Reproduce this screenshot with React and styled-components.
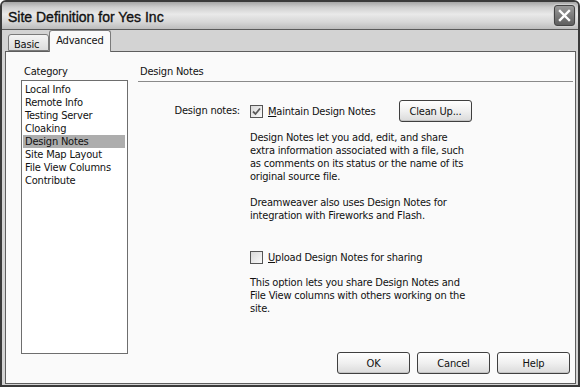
import React from "react";
import styled, { createGlobalStyle } from "styled-components";

const Global = createGlobalStyle`
  html, body { margin: 0; padding: 0; background: #fff; }
  body { font-family: "DejaVu Sans Condensed", "Liberation Sans", sans-serif; }
`;

const UI = `"DejaVu Sans Condensed", "Liberation Sans", sans-serif`;

const Window = styled.div`
  width: 580px;
  height: 387px;
  box-sizing: border-box;
  border: 2px solid #3a3a3a;
  border-radius: 6px 6px 0 0;
  background: #d3d3d3;
  display: flex;
  flex-direction: column;
  overflow: hidden;
  font-family: ${UI};
  font-size: 11px;
  letter-spacing: -0.2px;
  color: #111;
`;

const TitleBar = styled.div`
  height: 27px;
  flex: none;
  border-bottom: 1px solid #5a5a5a;
  background: linear-gradient(#a6a6a6 0%, #cfcfcf 20%, #e9e9e9 45%, #d6d6d6 75%, #bcbcbc 100%);
  display: flex;
  align-items: center;
  justify-content: space-between;
  padding: 0 3px 0 6px;
`;

const Title = styled.div`
  font-family: "Liberation Sans", sans-serif;
  font-size: 14px;
  letter-spacing: 0;
  -webkit-text-stroke: 0.35px #111;
  color: #111;
  padding-top: 2px;
`;

const CloseButton = styled.div`
  width: 19px;
  height: 19px;
  border: 1px solid #444;
  border-radius: 3px;
  box-shadow: 0 0 0 1px #cfcfcf;
  background: linear-gradient(#9a9a9a, #5e5e5e);
  display: flex;
  align-items: center;
  justify-content: center;
`;

const Frame = styled.div`
  flex: 1;
  display: flex;
  flex-direction: column;
  padding: 0 2px 1px 3px;
  min-height: 0;
`;

const TabStrip = styled.div`
  height: 21px;
  flex: none;
  display: flex;
  align-items: flex-end;
  padding-left: 3px;
`;

const Tab = styled.div`
  position: relative;
  z-index: ${(p) => (p.$active ? 2 : 1)};
  height: ${(p) => (p.$active ? "22px" : "17px")};
  margin-bottom: ${(p) => (p.$active ? "-1px" : "0")};
  box-sizing: border-box;
  padding: ${(p) => (p.$active ? "3px 7px 0 6px" : "3px 9px 0 5px")};
  border: 1px solid #7a7a7a;
  border-bottom: ${(p) => (p.$active ? "none" : "1px solid #7a7a7a")};
  border-radius: 3px 3px 0 0;
  background: ${(p) => (p.$active ? "#fafafa" : "linear-gradient(#f4f4f4, #dcdcdc)")};
  line-height: 13px;
  font-size: 11px;
`;

const Panel = styled.div`
  flex: 1;
  min-height: 0;
  border: 1px solid #5e5e5e;
  background: #fafafa;
  display: grid;
  grid-template-columns: 107px 1fr;
  column-gap: 10px;
  padding: 13px 2px 9px 15px;
`;

const Sidebar = styled.div`
  display: flex;
  flex-direction: column;
`;

const Label = styled.div`
  line-height: 13px;
  padding-left: 3px;
`;

const ListBox = styled.div`
  margin-top: 2px;
  margin-bottom: 20px;
  flex: 1;
  border: 1px solid #6e6e6e;
  background: #fff;
  padding: 2px 2px 0 1px;
`;

const ListItem = styled.div`
  line-height: 13px;
  height: 13px;
  padding-left: 2px;
  background: ${(p) => (p.$selected ? "#adadad" : "transparent")};
  white-space: nowrap;
`;

const Main = styled.div`
  display: flex;
  flex-direction: column;
`;

const SectionHeader = styled.div`
  line-height: 13px;
  padding: 0 0 3px 2px;
  border-bottom: 1px solid #8a8a8a;
`;

const FormGrid = styled.div`
  margin-top: 18px;
  display: grid;
  grid-template-columns: 102px 1fr;
  column-gap: 10px;
  align-items: start;
`;

const FieldLabel = styled.div`
  text-align: right;
  line-height: 13px;
  padding-top: 4px;
`;

const Content = styled.div`
  display: flex;
  flex-direction: column;
`;

const CheckRow = styled.div`
  display: flex;
  align-items: center;
  margin-top: ${(p) => p.$mt || 0}px;
  height: ${(p) => (p.$tall ? "22px" : "13px")};
`;

const Box = styled.div`
  width: 11px;
  height: 11px;
  border: 1px solid #555;
  background: linear-gradient(135deg, #d8d8d8, #fafafa);
  display: flex;
  align-items: center;
  justify-content: center;
  flex: none;
`;

const CheckText = styled.span`
  margin-left: 5px;
  line-height: 13px;
  white-space: nowrap;
  u { text-decoration: underline; text-underline-offset: 1px; }
`;

const Button = styled.div`
  box-sizing: border-box;
  width: ${(p) => p.$w || 73}px;
  height: 22px;
  border: 1px solid #3f3f3f;
  border-radius: 3px;
  background: linear-gradient(#ffffff 0%, #f0f0f0 50%, #dadada 100%);
  box-shadow: inset 0 -1px 0 #c4c4c4;
  display: flex;
  align-items: center;
  justify-content: center;
  font-size: 11px;
  flex: none;
`;

const CleanUp = styled(Button)`
  margin-left: auto;
  margin-right: 101px;
`;

const Para = styled.p`
  margin: ${(p) => p.$mt || 0}px 0 0 0;
  line-height: 13px;
  white-space: nowrap;
`;

const Footer = styled.div`
  margin-top: auto;
  display: flex;
  justify-content: flex-end;
  gap: 7px;
  padding-right: 3px;
`;

const Check = () => (
  <svg width="9" height="9" viewBox="0 0 9 9">
    <path d="M1 4.5 L3.5 7 L8 1.5" stroke="#5a5a5a" strokeWidth="1.8" fill="none" />
  </svg>
);

const XIcon = () => (
  <svg width="13" height="13" viewBox="0 0 13 13">
    <path d="M2 2 L11 11 M11 2 L2 11" stroke="#fff" strokeWidth="2.4" strokeLinecap="square" />
  </svg>
);

const categories = [
  "Local Info",
  "Remote Info",
  "Testing Server",
  "Cloaking",
  "Design Notes",
  "Site Map Layout",
  "File View Columns",
  "Contribute",
];

export default function App() {
  return (
    <>
      <Global />
      <Window>
        <TitleBar>
          <Title>Site Definition for Yes Inc</Title>
          <CloseButton>
            <XIcon />
          </CloseButton>
        </TitleBar>
        <Frame>
          <TabStrip>
            <Tab>Basic</Tab>
            <Tab $active>Advanced</Tab>
          </TabStrip>
          <Panel>
            <Sidebar>
              <Label>Category</Label>
              <ListBox>
                {categories.map((c) => (
                  <ListItem key={c} $selected={c === "Design Notes"}>
                    {c}
                  </ListItem>
                ))}
              </ListBox>
            </Sidebar>
            <Main>
              <SectionHeader>Design Notes</SectionHeader>
              <FormGrid>
                <FieldLabel>Design notes:</FieldLabel>
                <Content>
                  <CheckRow $tall>
                    <Box>
                      <Check />
                    </Box>
                    <CheckText>
                      <u>M</u>aintain Design Notes
                    </CheckText>
                    <CleanUp>Clean Up...</CleanUp>
                  </CheckRow>
                  <Para $mt={9}>
                    Design Notes let you add, edit, and share
                    <br />
                    extra information associated with a file, such
                    <br />
                    as comments on its status or the name of its
                    <br />
                    original source file.
                  </Para>
                  <Para $mt={13}>
                    Dreamweaver also uses Design Notes for
                    <br />
                    integration with Fireworks and Flash.
                  </Para>
                  <CheckRow $mt={29}>
                    <Box />
                    <CheckText>
                      <u>U</u>pload Design Notes for sharing
                    </CheckText>
                  </CheckRow>
                  <Para $mt={12}>
                    This option lets you share Design Notes and
                    <br />
                    File View columns with others working on the
                    <br />
                    site.
                  </Para>
                </Content>
              </FormGrid>
              <Footer>
                <Button>OK</Button>
                <Button>Cancel</Button>
                <Button>Help</Button>
              </Footer>
            </Main>
          </Panel>
        </Frame>
      </Window>
    </>
  );
}
